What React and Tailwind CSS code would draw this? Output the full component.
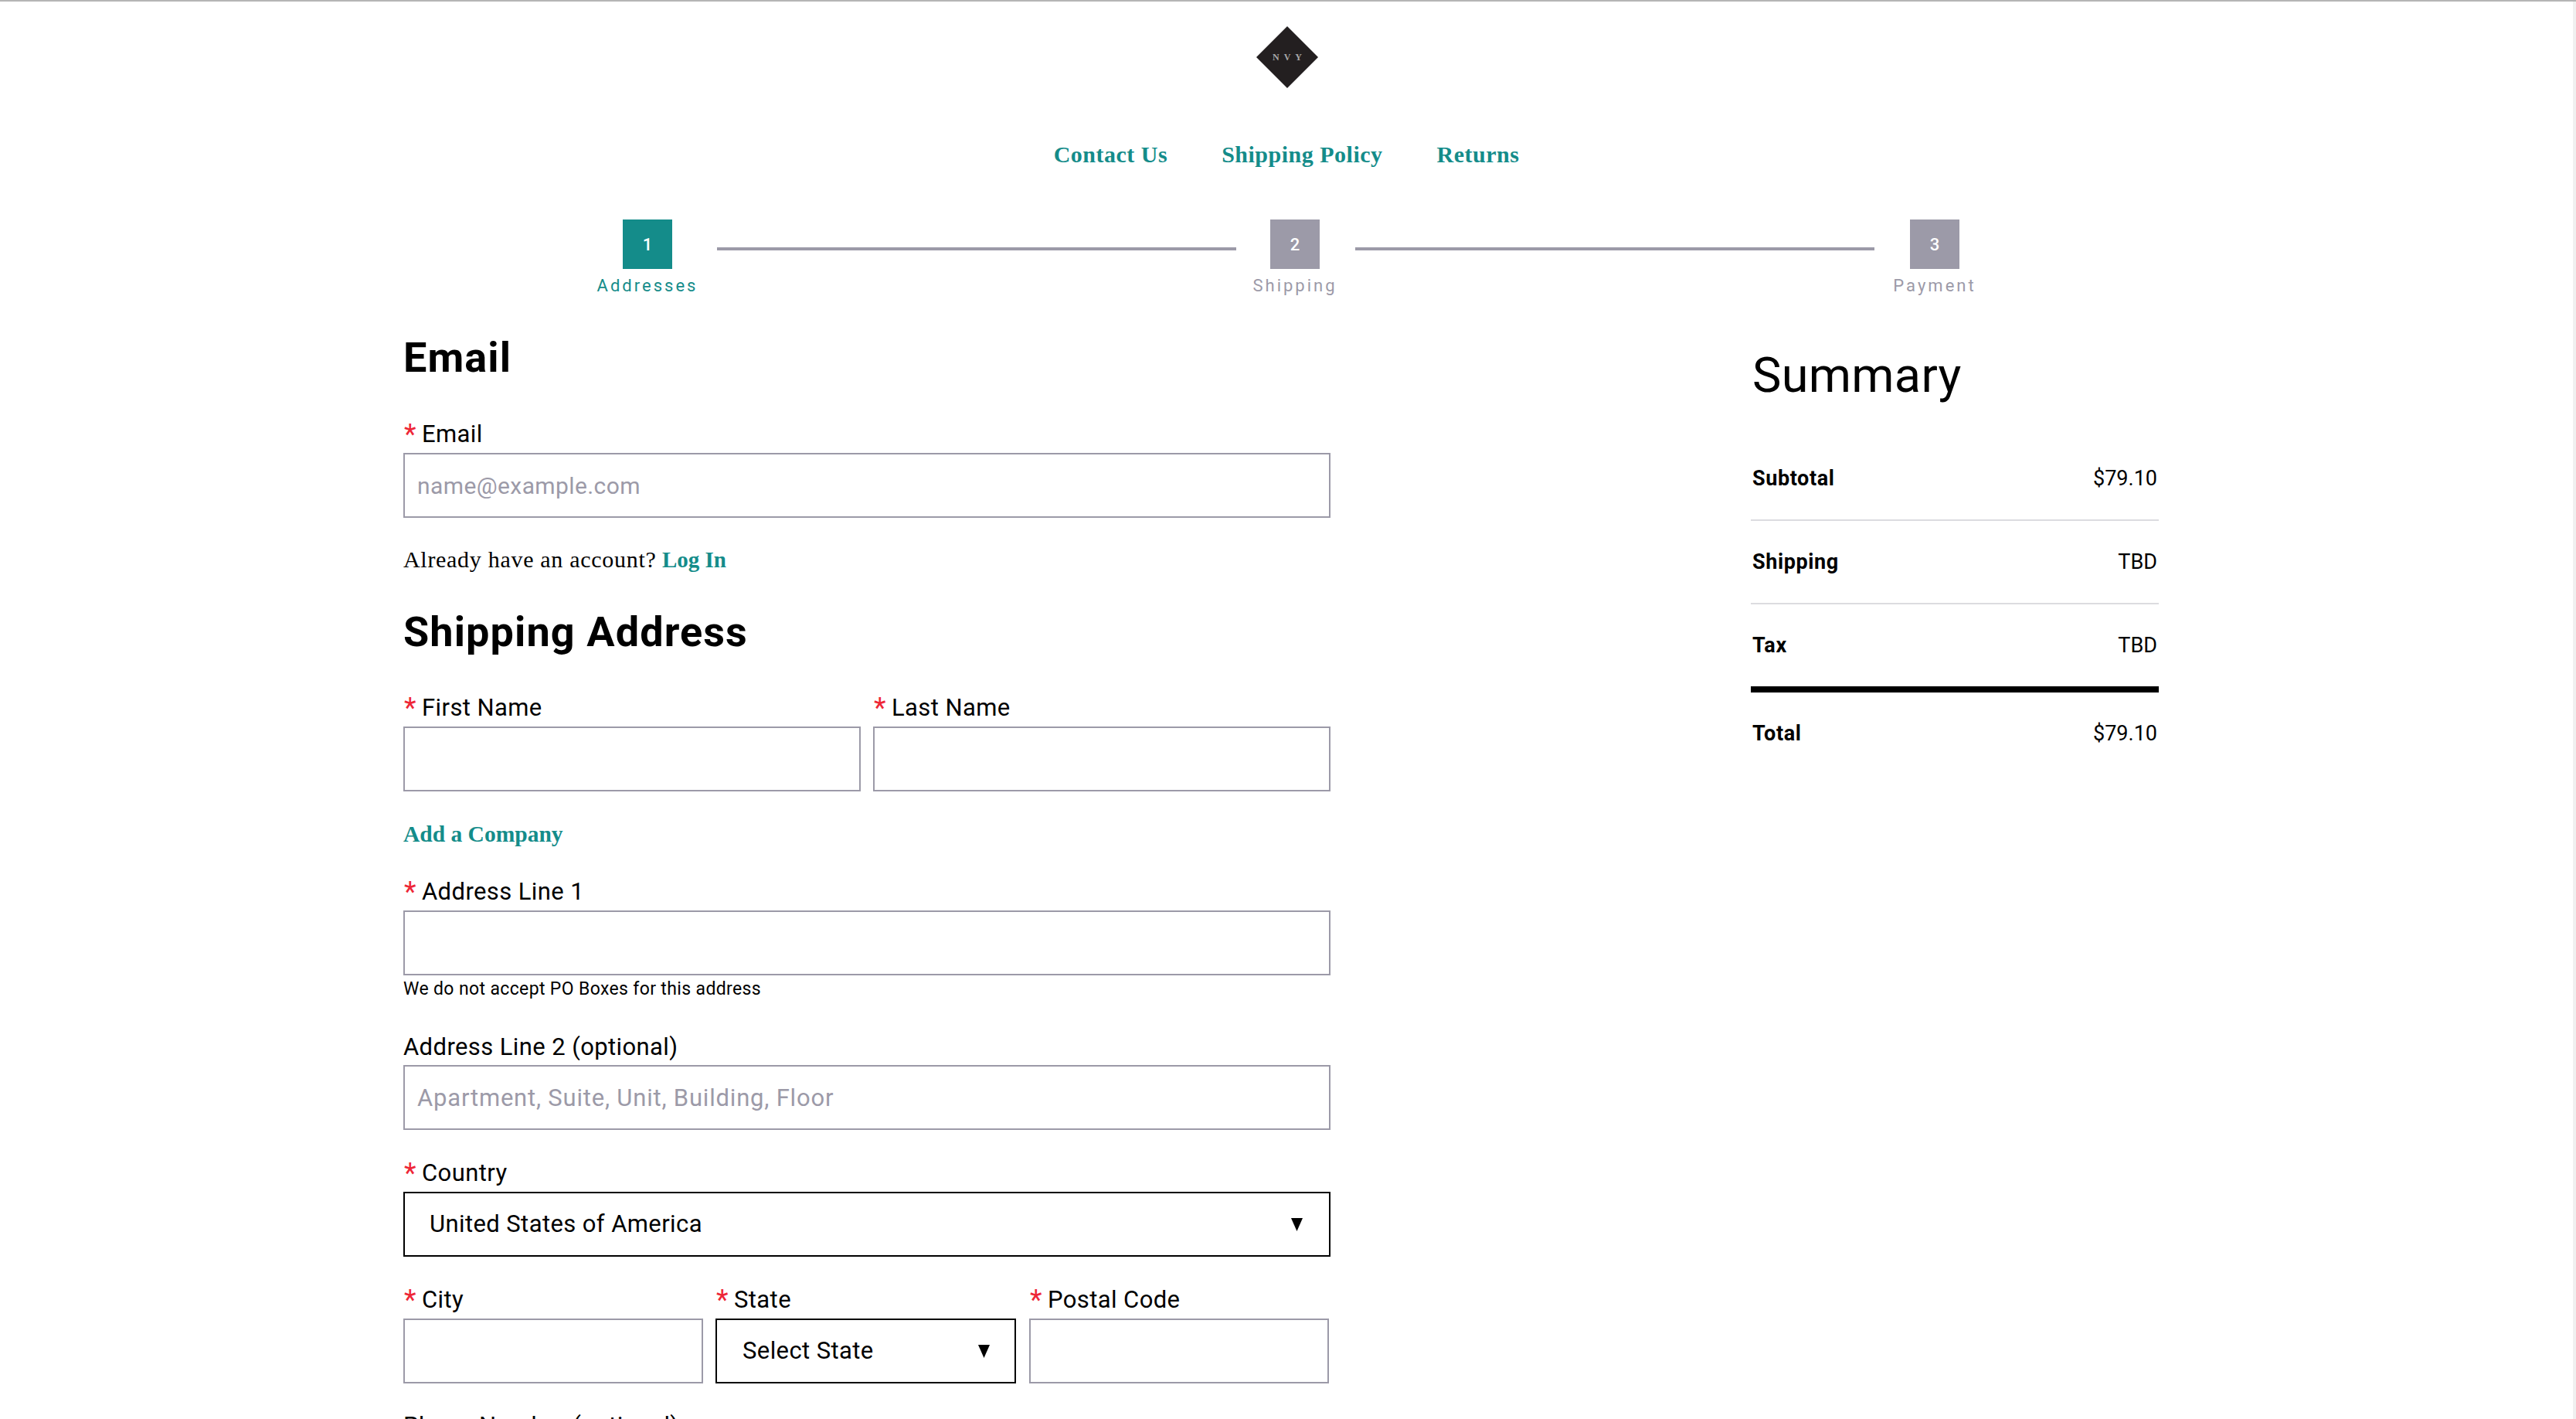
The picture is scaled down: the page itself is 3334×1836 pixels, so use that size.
const sans = "font-['Roboto',sans-serif]";
const serif = "font-['Liberation_Serif',serif]";

const Label = ({ text, required, className = "" }) => (
  <label className={`flex h-[36px] leading-[40px] text-[31px] tracking-[0.4px] text-black whitespace-nowrap ${className}`}>
    {required && <span className="w-[24px] text-[36px] text-[#ee2737] pl-[1px]">*</span>}
    <span>{text}</span>
  </label>
);

const Input = ({ placeholder, font = "text-[31px] tracking-[0.4px]" }) => (
  <input
    placeholder={placeholder}
    className={`block w-full h-[84px] border-2 border-[#9c9aa8] bg-white px-[16px] outline-none placeholder:text-[#9c9aa8] ${font}`}
  />
);

const Select = ({ value, padding = "pl-[32px]", arrowClass = "" }) => (
  <div className={`flex items-center justify-between h-[84px] border-2 border-black pr-[32px] text-[31px] tracking-[0.4px] text-black ${padding}`}>
    <span>{value}</span>
    <svg width="15" height="17" viewBox="0 0 15 17" className={arrowClass}>
      <polygon points="0,0 15,0 7.5,17" fill="#000" />
    </svg>
  </div>
);

const Step = ({ n, label, active, className = "" }) => (
  <div className={`w-[128px] flex flex-col items-center shrink-0 ${className}`}>
    <div className={`w-[64px] h-[64px] flex items-center justify-center text-white text-[22px] font-medium ${active ? "bg-[#148c8a]" : "bg-[#9c9aa8]"}`}>{n}</div>
    <div className={`mt-[10px] h-[24px] leading-[24px] text-[22px] tracking-[3px] whitespace-nowrap ${active ? "text-[#148c8a]" : "text-[#9c9aa8]"}`}>{label}</div>
  </div>
);

const Connector = ({ className = "" }) => <div className={`h-[4px] w-[672px] bg-[#9c9aa8] mt-[36px] shrink-0 ${className}`} />;

const Row = ({ label, value }) => (
  <div className="flex items-center justify-between h-[106px] px-[2px] text-[27px] text-black">
    <span className="font-bold tracking-[0.6px]">{label}</span>
    <span>{value}</span>
  </div>
);

export default function App() {
  return (
    <div className={`relative h-[1836px] overflow-hidden bg-white ${sans}`}>
      <div className="h-[2px] bg-[#b5b5b5]" />
      <div className="absolute right-0 top-[2px] bottom-0 w-[4px] bg-[#f0f0f0]" />

      <div className="w-[3330px]">
        <div className="flex justify-center pt-[32px] pl-[2px]">
          <svg width="80" height="80" viewBox="0 0 80 80">
            <polygon points="40,0 80,40 40,80 0,40" fill="#231f20" />
            <text x="43" y="44" textAnchor="middle" fontSize="12" fontWeight="700" letterSpacing="6" fontFamily="Liberation Serif, serif" fill="#a8a8a8">NVY</text>
          </svg>
        </div>

        <nav className={`flex justify-center gap-[70px] mt-[66px] h-[40px] leading-[40px] text-[30px] tracking-[0.5px] font-bold text-[#148c8a] ${serif}`}>
          <a>Contact Us</a>
          <a>Shipping Policy</a>
          <a>Returns</a>
        </nav>

        <div className="flex mt-[64px] pl-[774px]">
          <Step n="1" label="Addresses" active />
          <Connector className="ml-[26px]" />
          <Step n="2" label="Shipping" className="ml-[12px]" />
          <Connector className="ml-[14px]" />
          <Step n="3" label="Payment" className="ml-[14px]" />
        </div>

        <div className="flex w-[2286px] mx-auto">
          <div className="w-[1200px] shrink-0">
            <h2 className="mt-[51px] h-[60px] leading-[60px] text-[54px] tracking-[1.1px] font-bold text-black">Email</h2>
            <Label text="Email" required className="mt-[49px] mb-[8px]" />
            <Input placeholder="name@example.com" font="text-[30px] tracking-[0.4px]" />
            <p className={`mt-[34px] h-[40px] leading-[40px] text-[30px] text-black ${serif}`}>
              <span className="tracking-[0.7px]">Already have an account?</span> <a className="font-bold text-[29px] text-[#148c8a]">Log In</a>
            </p>
            <h2 className="mt-[44px] h-[60px] leading-[60px] text-[54px] tracking-[1.1px] font-bold text-black">Shipping Address</h2>

            <div className="grid grid-cols-2 gap-x-[16px] mt-[48px]">
              <div>
                <Label text="First Name" required className="mb-[8px]" />
                <Input />
              </div>
              <div>
                <Label text="Last Name" required className="mb-[8px]" />
                <Input />
              </div>
            </div>

            <a className={`block mt-[35px] h-[40px] leading-[40px] text-[29.5px] font-bold text-[#148c8a] ${serif}`}>Add a Company</a>

            <Label text="Address Line 1" required className="mt-[35px] mb-[8px]" />
            <Input />
            <p className="mt-[4px] h-[28px] leading-[28px] text-[23px] tracking-[0.36px] text-black">We do not accept PO Boxes for this address</p>

            <Label text="Address Line 2 (optional)" className="mt-[41px] mb-[7px]" />
            <Input placeholder="Apartment, Suite, Unit, Building, Floor" font="text-[31px] tracking-[0.8px]" />

            <Label text="Country" required className="mt-[36px] mb-[8px]" />
            <Select value="United States of America" arrowClass="mr-[2px]" />

            <div className="flex mt-[36px]">
              <div className="w-[388px]">
                <Label text="City" required className="mb-[8px]" />
                <Input />
              </div>
              <div className="w-[389px] ml-[16px]">
                <Label text="State" required className="mb-[8px]" />
                <Select value="Select State" padding="pl-[33px]" />
              </div>
              <div className="w-[388px] ml-[17px]">
                <Label text="Postal Code" required className="mb-[8px]" />
                <Input />
              </div>
            </div>

            <Label text="Phone Number (optional)" className="mt-[35px]" />
          </div>

          <aside className="ml-auto mr-[14px] w-[528px]">
            <h2 className="mt-[64px] h-[80px] leading-[80px] text-[63px] text-black tracking-[0.3px] pl-[2px]">Summary</h2>
            <div className="mt-[40px]">
              <div className="border-b-2 border-[#dcdce0]"><Row label="Subtotal" value="$79.10" /></div>
              <div className="border-b-2 border-[#dcdce0]"><Row label="Shipping" value="TBD" /></div>
              <div className="border-b-[8px] border-black"><Row label="Tax" value="TBD" /></div>
              <Row label="Total" value="$79.10" />
            </div>
          </aside>
        </div>
      </div>
    </div>
  );
}
